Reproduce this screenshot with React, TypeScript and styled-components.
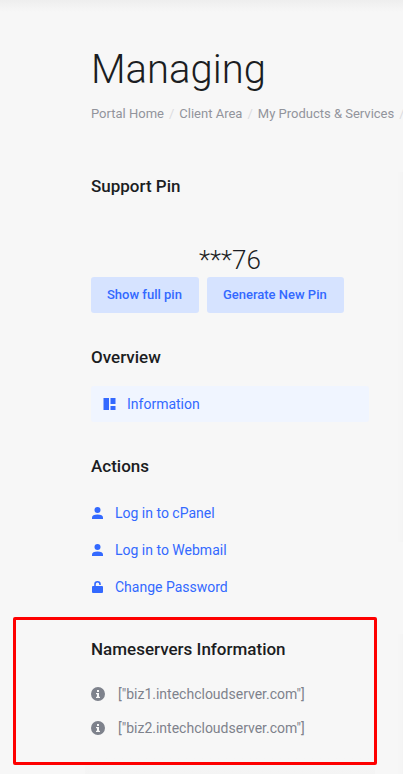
import React from "react";
import styled, { createGlobalStyle, css } from "styled-components";

const GlobalStyle = createGlobalStyle`
  *, *::before, *::after { box-sizing: border-box; }
  body {
    margin: 0;
    background: #f7f7f7;
    color: #1b1d22;
    font-family: Roboto, "Liberation Sans", sans-serif;
    font-size: 14px;
  }
`;

const Page = styled.main`
  min-height: 100vh;
  padding: 45px 0 8px;
  overflow: hidden;
  background-image:
    linear-gradient(to bottom, #eeeeee, #f7f7f7),
    linear-gradient(to right, #f7f7f7, #f4f4f4),
    linear-gradient(to right, #f7f7f7, #f4f4f4),
    linear-gradient(to bottom, #f7f7f7, #f4f4f4);
  background-size: 100% 12px, 6px 370px, 6px 140px, 290px 16px;
  background-position: 0 0, right 172px, right 634px, 85px 100%;
  background-repeat: no-repeat;
`;

const PageHeader = styled.header`
  padding-left: 91px;
`;

const Title = styled.h1`
  margin: 0;
  font-size: 40px;
  line-height: 50px;
  font-weight: 300;
`;

const Breadcrumb = styled.ol`
  display: flex;
  margin: 9px 0 0;
  padding: 0;
  list-style: none;
  font-size: 13px;
  line-height: 20px;
  white-space: nowrap;
`;

const Crumb = styled.li`
  color: #92949c;

  &::after {
    content: "/";
    margin: 0 5px;
    color: #dcdcdf;
  }
`;

const CrumbLink = styled.a`
  color: inherit;
  text-decoration: none;
`;

const Panel = styled.section<{ $space: number }>`
  margin-top: ${(p) => p.$space}px;
  padding: 0 34px 0 91px;
`;

const Callout = styled.section`
  margin: 12px 26px 0 13px;
  padding: 17px 0 17px 75px;
  border: 3px solid #fe0000;
  border-radius: 2px;
`;

const Heading = styled.h2`
  margin: 0;
  font-size: 17px;
  line-height: 24px;
  font-weight: 500;
`;

const Pin = styled.p`
  margin: 45px 0 0;
  font-size: 26px;
  line-height: 34px;
  font-weight: 300;
  text-align: center;
`;

const ButtonRow = styled.div`
  display: flex;
  gap: 8px;
`;

const SoftButton = styled.button`
  height: 36px;
  padding: 0 17px 0 16px;
  border: 0;
  border-radius: 3px;
  background: #d6e3ff;
  color: #3369ff;
  font: 500 13px/20px Roboto, "Liberation Sans", sans-serif;
  white-space: nowrap;
  cursor: pointer;
`;

const List = styled.ul<{ $space: number }>`
  margin: ${(p) => p.$space}px 0 0;
  padding: 0;
  list-style: none;
`;

const row = css`
  display: flex;
  align-items: center;
  line-height: 20px;
  white-space: nowrap;

  svg {
    flex: none;
    fill: currentColor;
  }
`;

const MenuLink = styled.a<{ $active?: boolean }>`
  ${row}
  height: ${(p) => (p.$active ? 36 : 37)}px;
  gap: 11px;
  padding: ${(p) => (p.$active ? "0 12px" : "0")};
  border-radius: 3px;
  background: ${(p) => (p.$active ? "#f0f5ff" : "transparent")};
  color: #3369ff;
  text-decoration: none;
`;

const Server = styled.li`
  ${row}
  height: 34px;
  gap: 13px;
  color: #7e828c;
`;

const DashboardIcon = () => (
  <svg width="13" height="14" viewBox="0 0 13 14" aria-hidden="true">
    <path d="M.5 1H6v12H.5zM7.500 1h5v6h-5zM7.500 9h5v4h-5z" />
  </svg>
);

const UserIcon = () => (
  <svg width="13" height="14" viewBox="0 0 13 14" aria-hidden="true">
    <circle cx="6.5" cy="4" r="3" />
    <path d="M1 13v-1.500C1 9.500 3 8.500 6.500 8.500S12 9.500 12 11.500V13z" />
  </svg>
);

const UnlockIcon = () => (
  <svg width="13" height="14" viewBox="0 0 13 14" aria-hidden="true">
    <path d="M2 6h1.200V4.300a3.300 3.300 0 0 1 6.600 0V5H8.200v-.7a1.700 1.700 0 0 0-3.400 0V6H11a1 1 0 0 1 1 1v5a1 1 0 0 1-1 1H2a1 1 0 0 1-1-1V7a1 1 0 0 1 1-1z" />
  </svg>
);

const InfoIcon = () => (
  <svg width="14" height="14" viewBox="0 0 14 14" aria-hidden="true">
    <path
      fillRule="evenodd"
      d="M7 0a7 7 0 1 1 0 14A7 7 0 0 1 7 0zM6 3v2h2V3zM5 6v1.300h1v2.400H5V11h4V9.700H8V6z"
    />
  </svg>
);

const crumbs = ["Portal Home", "Client Area", "My Products & Services"];

const actions = [
  { label: "Log in to cPanel", Icon: UserIcon },
  { label: "Log in to Webmail", Icon: UserIcon },
  { label: "Change Password", Icon: UnlockIcon },
];

const servers = ['["biz1.intechcloudserver.com"]', '["biz2.intechcloudserver.com"]'];

export default function App() {
  return (
    <>
      <GlobalStyle />
      <Page>
        <PageHeader>
          <Title>Managing</Title>
          <nav aria-label="Breadcrumb">
            <Breadcrumb>
              {crumbs.map((c) => (
                <Crumb key={c}>
                  <CrumbLink href="#">{c}</CrumbLink>
                </Crumb>
              ))}
            </Breadcrumb>
          </nav>
        </PageHeader>

        <Panel $space={50}>
          <Heading>Support Pin</Heading>
          <Pin>***76</Pin>
          <ButtonRow>
            <SoftButton type="button">Show full pin</SoftButton>
            <SoftButton type="button">Generate New Pin</SoftButton>
          </ButtonRow>
        </Panel>

        <Panel $space={32}>
          <Heading>Overview</Heading>
          <List $space={17}>
            <li>
              <MenuLink href="#" $active>
                <DashboardIcon />
                Information
              </MenuLink>
            </li>
          </List>
        </Panel>

        <Panel $space={32}>
          <Heading>Actions</Heading>
          <List $space={16}>
            {actions.map(({ label, Icon }) => (
              <li key={label}>
                <MenuLink href="#">
                  <Icon />
                  {label}
                </MenuLink>
              </li>
            ))}
          </List>
        </Panel>

        <Callout>
          <Heading>Nameservers Information</Heading>
          <List $space={16}>
            {servers.map((s) => (
              <Server key={s}>
                <InfoIcon />
                {s}
              </Server>
            ))}
          </List>
        </Callout>
      </Page>
    </>
  );
}
